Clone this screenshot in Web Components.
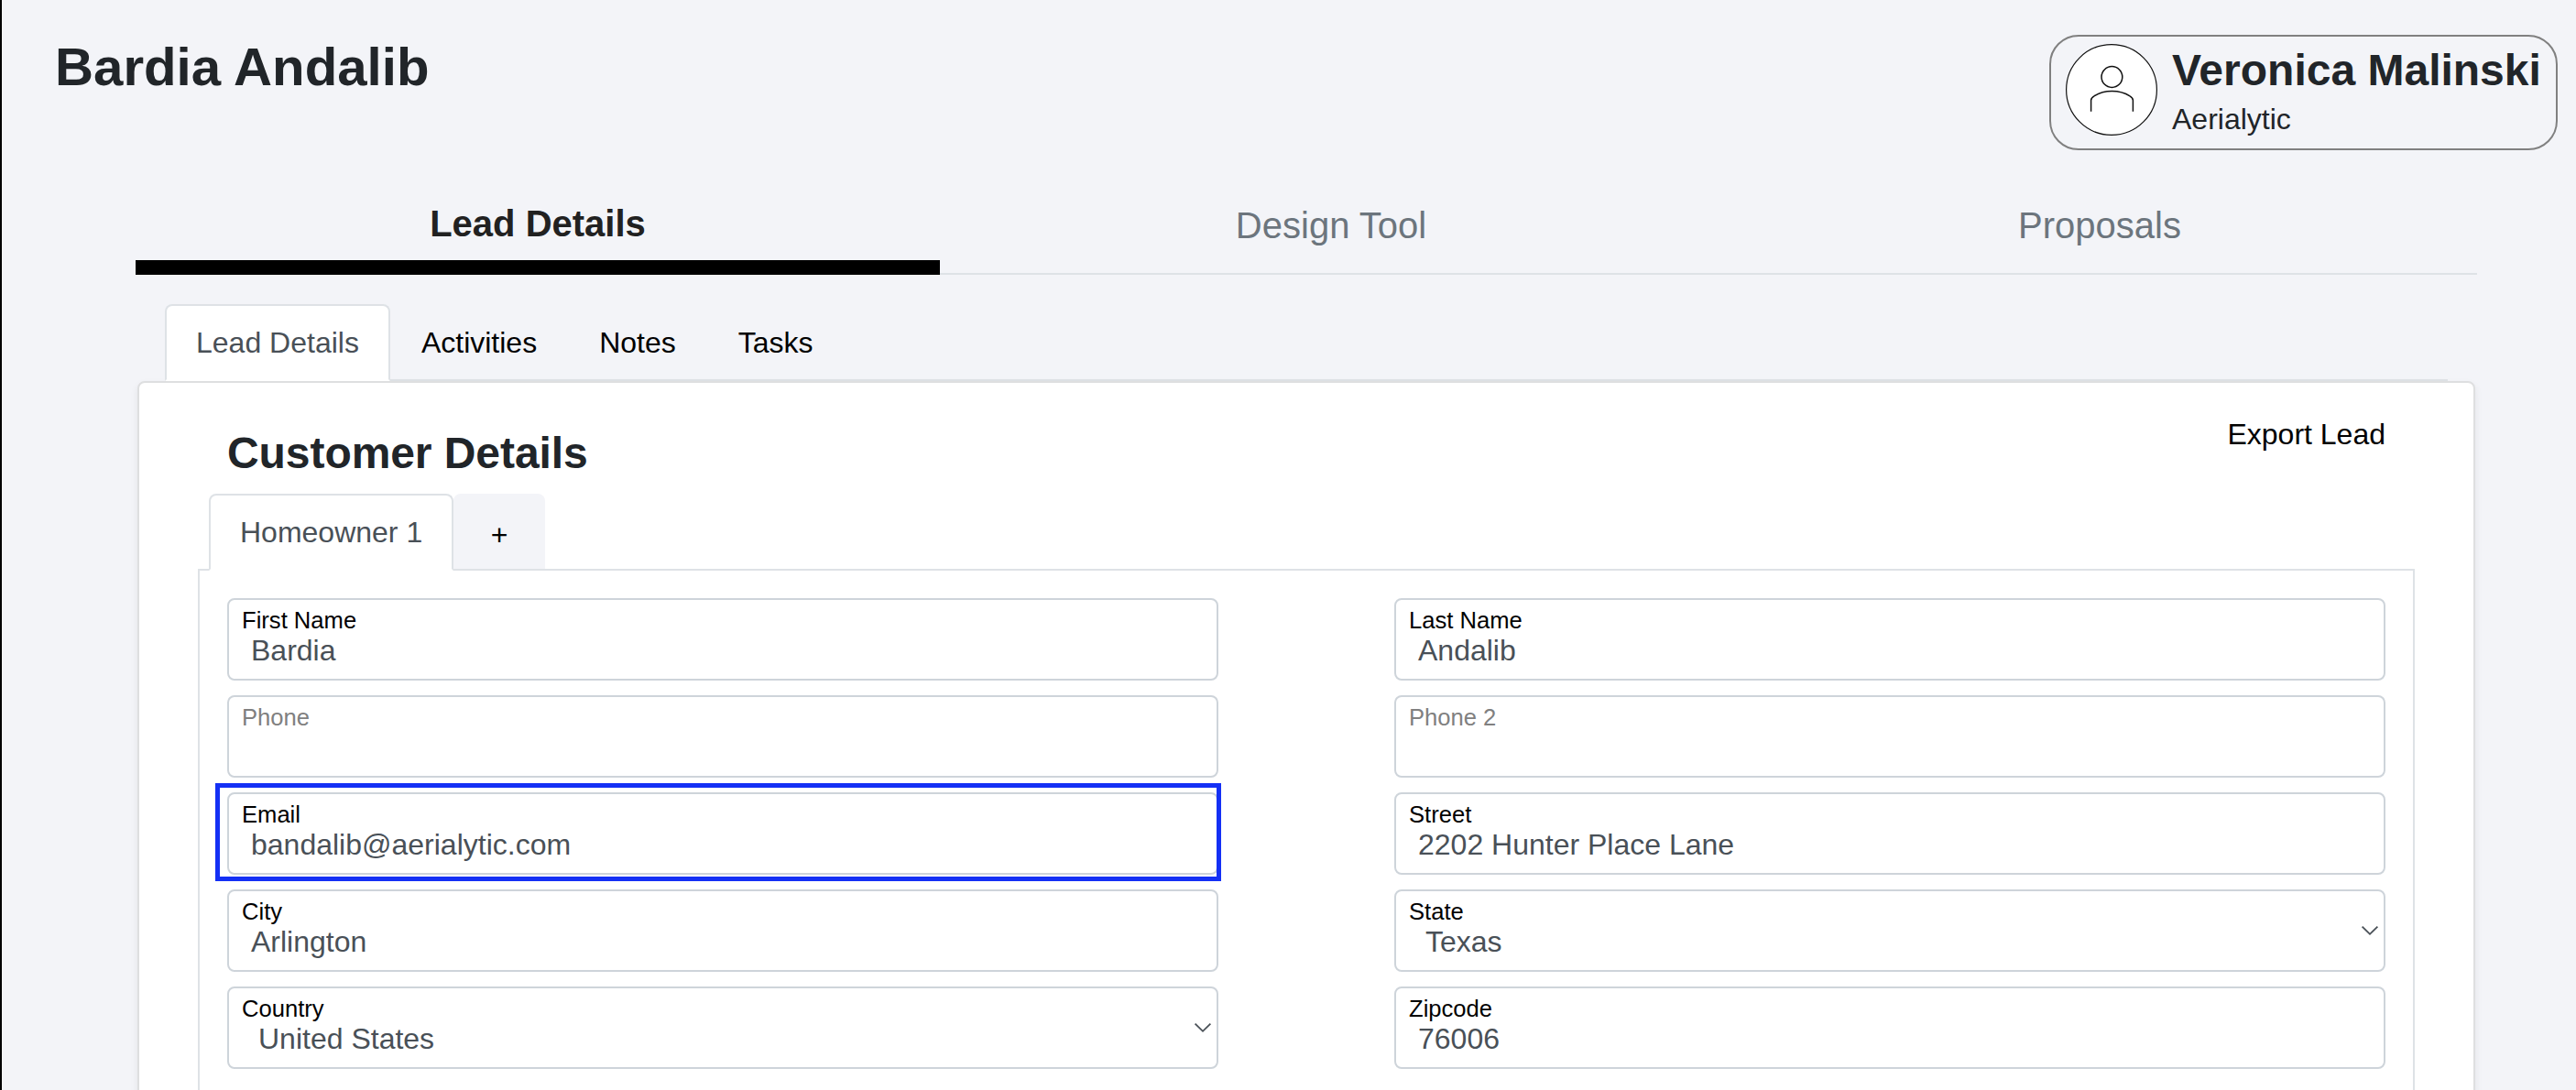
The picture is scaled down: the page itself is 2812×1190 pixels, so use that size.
<!DOCTYPE html>
<html lang="en">
<head>
<meta charset="utf-8">
<title>Lead Details</title>
<style>
    body {
        margin: 0;
        height: 1190px;
        overflow: hidden;
        background: #f3f4f8;
        color: #212529;
        font: 32px "Liberation Sans", Arial, sans-serif;
    }
</style>
</head>
<body>
<lead-page></lead-page>

<script>
class UserBadge extends HTMLElement {
    constructor() {
        super();
        this.shadow = this.attachShadow({ mode: 'open' });
    }

    connectedCallback() {
        this.shadow.innerHTML = /*html*/ `
            <style>
                :host {
                    display: flex;
                    box-sizing: border-box;
                    width: 555px;
                    height: 126px;
                    padding: 8px 0 0 16px;
                    gap: 16px;
                    border: 2px solid #808080;
                    border-radius: 32px;
                }
                svg { display: block; flex: none; }
                .name { margin-top: 1px; font-size: 48px; font-weight: bold; line-height: 56px; white-space: nowrap; }
                .company { margin-top: 1px; line-height: 48px; }
            </style>
            <svg width="100" height="100" viewBox="0 0 100 100" fill="none" stroke="#111" stroke-width="1.5">
                <circle cx="50" cy="50" r="49.4" fill="#fff" stroke-width="1.2"/>
                <circle cx="50.4" cy="36" r="11.4"/>
                <path d="M27.6 73.8V61.5Q27.6 58.8 31 56.8C42 49.6 59 49.6 70 56.8Q73.4 58.8 73.4 61.5V73.8"/>
            </svg>
            <div>
                <div class="name"><slot name="name"></slot></div>
                <div class="company"><slot name="company"></slot></div>
            </div>
        `
    }
}

class MainTab extends HTMLElement {
    constructor() {
        super();
        this.shadow = this.attachShadow({ mode: 'open' });
    }

    connectedCallback() {
        this.shadow.innerHTML = /*html*/ `
            <style>
                :host {
                    display: block;
                    box-sizing: border-box;
                    height: 86px;
                    padding-top: 2px;
                    border-bottom: 2px solid #dee2e6;
                    color: #6c757d;
                    font-size: 40px;
                    line-height: 60px;
                    text-align: center;
                }
                :host([active]) {
                    padding-top: 0;
                    border-bottom: 16px solid #000;
                    color: #212121;
                    font-weight: bold;
                }
            </style>
            <slot></slot>
        `
    }
}

// folder style tab, sits on the bottom line of its nav
class FolderTab extends HTMLElement {
    constructor() {
        super();
        this.shadow = this.attachShadow({ mode: 'open' });
    }

    connectedCallback() {
        this.shadow.innerHTML = /*html*/ `
            <style>
                :host {
                    display: block;
                    box-sizing: border-box;
                    height: 84px;
                    margin-bottom: -2px;
                    padding: 0 32px;
                    border: 2px solid transparent;
                    border-radius: 8px 8px 0 0;
                    color: #000;
                    line-height: 80px;
                    white-space: nowrap;
                }
                :host([active]) {
                    border-color: #dee2e6 #dee2e6 #fff;
                    background: #fff;
                    color: #495057;
                }
                :host([add]) {
                    width: 100px;
                    height: 82px;
                    margin-bottom: 0;
                    padding: 4px 0 0;
                    background: #f3f4f8;
                    line-height: 78px;
                    text-align: center;
                }
            </style>
            <slot></slot>
        `
    }
}

class FormField extends HTMLElement {
    constructor() {
        super();
        this.shadow = this.attachShadow({ mode: 'open' });
    }

    connectedCallback() {
        const label = this.getAttribute('label')
        const value = this.getAttribute('value') || ''
        const chevron = /*html*/ `
            <svg width="20" height="12" viewBox="0 0 20 12" fill="none" stroke="#495057" stroke-width="1.8">
                <path d="M1.6 1.6L10 9.8L18.4 1.6"/>
            </svg>`

        this.shadow.innerHTML = /*html*/ `
            <style>
                :host {
                    display: flex;
                    position: relative;
                    box-sizing: border-box;
                    height: 90px;
                    padding-right: 5px;
                    align-items: center;
                    justify-content: space-between;
                    border: 2px solid #ced4da;
                    border-radius: 8px;
                    background: #fff;
                }
                .text { align-self: flex-start; }
                .label { padding: 7px 0 0 14px; color: #000; font-size: 25.6px; line-height: 30px; }
                .value { padding-left: 24px; color: #495057; line-height: 36px; }
                :host([select]) .value { padding-left: 32px; }
                :host([empty]) .label { color: #808080; }
                /* marker frame drawn round the whole field */
                :host([marked])::after {
                    content: "";
                    position: absolute;
                    inset: -12px -5px -9px -15px;
                    border: 5px solid #1430f5;
                }
            </style>
            <div class="text">
                <div class="label">${label}</div>
                <div class="value">${value}</div>
            </div>
            ${this.hasAttribute('select') ? chevron : ''}
        `
    }
}

class LeadCard extends HTMLElement {
    constructor() {
        super();
        this.shadow = this.attachShadow({ mode: 'open' });
    }

    connectedCallback() {
        this.shadow.innerHTML = /*html*/ `
            <style>
                :host {
                    display: block;
                    box-sizing: border-box;
                    height: 820px;
                    margin: 0 2px;
                    padding: 32px 64px 0;
                    border: 2px solid #dedfe0;
                    border-radius: 8px;
                    background: #fff;
                    box-shadow: 0 4px 8px rgba(0, 0, 0, .075);
                }
                header { display: flex; justify-content: space-between; padding: 0 32px; }
                h2 { margin: 15px 0 0; font-size: 48px; line-height: 60px; letter-spacing: -.07px; }
                .export { color: #000; line-height: 48px; }
                nav {
                    display: flex;
                    height: 82px;
                    margin-top: 14px;
                    padding-left: 12px;
                    border-bottom: 2px solid #dee2e6;
                }
                .pane {
                    display: grid;
                    grid-template-columns: 1fr 1fr;
                    gap: 16px 192px;
                    height: 600px;
                    padding: 30px;
                    align-content: start;
                    border: solid #dee2e6;
                    border-width: 0 2px;
                }
            </style>
            <header>
                <h2>Customer Details</h2>
                <div class="export">Export Lead</div>
            </header>
            <nav>
                <folder-tab active>Homeowner 1</folder-tab>
                <folder-tab add>+</folder-tab>
            </nav>
            <div class="pane"><slot></slot></div>
        `
    }
}

class LeadPage extends HTMLElement {
    constructor() {
        super();
        this.shadow = this.attachShadow({ mode: 'open' });
    }

    connectedCallback() {
        this.shadow.innerHTML = /*html*/ `
            <style>
                :host {
                    display: block;
                    box-sizing: border-box;
                    height: 1190px;
                    overflow: hidden;
                    border-left: 2px solid #000;
                }
                header { display: flex; justify-content: space-between; padding: 38px 20px 0 58px; }
                h1 { margin: 0; font-size: 58.2px; line-height: 70px; }
                main { margin: 50px 108px 0 146px; }
                .main-tabs { display: grid; grid-template-columns: 878fr 854fr 824fr; }
                .sub-tabs {
                    display: flex;
                    height: 82px;
                    margin: 32px 32px 0;
                    border-bottom: 2px solid #dee2e6;
                }
            </style>
            <header>
                <h1>Bardia Andalib</h1>
                <user-badge>
                    <span slot="name">Veronica Malinski</span>
                    <span slot="company">Aerialytic</span>
                </user-badge>
            </header>
            <main>
                <nav class="main-tabs">
                    <main-tab active>Lead Details</main-tab>
                    <main-tab>Design Tool</main-tab>
                    <main-tab>Proposals</main-tab>
                </nav>
                <nav class="sub-tabs">
                    <folder-tab active>Lead Details</folder-tab>
                    <folder-tab>Activities</folder-tab>
                    <folder-tab>Notes</folder-tab>
                    <folder-tab>Tasks</folder-tab>
                </nav>
                <lead-card>
                    <form-field label="First Name" value="Bardia"></form-field>
                    <form-field label="Last Name" value="Andalib"></form-field>
                    <form-field label="Phone" empty></form-field>
                    <form-field label="Phone 2" empty></form-field>
                    <form-field label="Email" value="bandalib@aerialytic.com" marked></form-field>
                    <form-field label="Street" value="2202 Hunter Place Lane"></form-field>
                    <form-field label="City" value="Arlington"></form-field>
                    <form-field label="State" value="Texas" select></form-field>
                    <form-field label="Country" value="United States" select></form-field>
                    <form-field label="Zipcode" value="76006"></form-field>
                </lead-card>
            </main>
        `
    }
}

customElements.define("user-badge", UserBadge)
customElements.define("main-tab", MainTab)
customElements.define("folder-tab", FolderTab)
customElements.define("form-field", FormField)
customElements.define("lead-card", LeadCard)
customElements.define("lead-page", LeadPage)
</script>
</body>
</html>
